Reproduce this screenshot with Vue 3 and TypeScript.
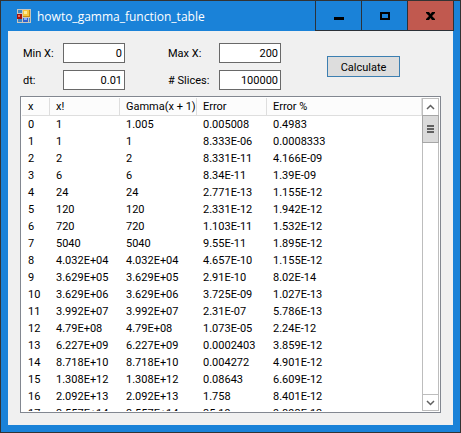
<script setup lang="ts">
import { ref } from 'vue'

const minX = ref('0')
const maxX = ref('200')
const dt = ref('0.01')
const slices = ref('100000')

const columns: string[] = ['x', 'x!', 'Gamma(x + 1)', 'Error', 'Error %']

const rows: string[][] = [
  ['0', '1', '1.005', '0.005008', '0.4983'],
  ['1', '1', '1', '8.333E-06', '0.0008333'],
  ['2', '2', '2', '8.331E-11', '4.166E-09'],
  ['3', '6', '6', '8.34E-11', '1.39E-09'],
  ['4', '24', '24', '2.771E-13', '1.155E-12'],
  ['5', '120', '120', '2.331E-12', '1.942E-12'],
  ['6', '720', '720', '1.103E-11', '1.532E-12'],
  ['7', '5040', '5040', '9.55E-11', '1.895E-12'],
  ['8', '4.032E+04', '4.032E+04', '4.657E-10', '1.155E-12'],
  ['9', '3.629E+05', '3.629E+05', '2.91E-10', '8.02E-14'],
  ['10', '3.629E+06', '3.629E+06', '3.725E-09', '1.027E-13'],
  ['11', '3.992E+07', '3.992E+07', '2.31E-07', '5.786E-13'],
  ['12', '4.79E+08', '4.79E+08', '1.073E-05', '2.24E-12'],
  ['13', '6.227E+09', '6.227E+09', '0.0002403', '3.859E-12'],
  ['14', '8.718E+10', '8.718E+10', '0.004272', '4.901E-12'],
  ['15', '1.308E+12', '1.308E+12', '0.08643', '6.609E-12'],
  ['16', '2.092E+13', '2.092E+13', '1.758', '8.401E-12'],
  ['17', '3.557E+14', '3.557E+14', '35.19', '9.893E-12'],
]
</script>

<template>
  <div class="window">
    <header class="titlebar">
      <svg class="app-icon" width="14" height="14" viewBox="0 0 14 14" aria-hidden="true">
        <rect width="14" height="14" fill="#c9c5bd" />
        <rect x="1" y="1" width="4" height="3" fill="#3f86c4" />
        <rect x="1" y="10" width="4" height="3" fill="#3f86c4" />
        <rect x="12" y="9" width="1" height="4" fill="#3f86c4" />
        <rect x="0" y="5" width="5" height="5" fill="#a3120c" />
        <rect x="1" y="6" width="2" height="2" fill="#ef6a58" />
        <rect x="6" y="1" width="7" height="7" fill="#c78d12" />
        <rect x="6" y="1" width="6" height="6" fill="#f5c73d" />
        <rect x="7" y="2" width="3" height="3" fill="#fdeb9b" />
        <rect x="6" y="9" width="5" height="4" fill="#2f62cf" />
        <rect x="7" y="9" width="3" height="2" fill="#86aef4" />
      </svg>
      <h1 class="title">howto_gamma_function_table</h1>
      <button class="caption" type="button" aria-label="Minimize">
        <svg width="10" height="10" viewBox="0 0 10 10"><path d="M0 6h10v3H0z" /></svg>
      </button>
      <button class="caption" type="button" aria-label="Maximize">
        <svg width="10" height="10" viewBox="0 0 10 10">
          <path fill-rule="evenodd" d="M0 1h10v8H0zM2 3v4h6V3z" />
        </svg>
      </button>
      <button class="caption close" type="button" aria-label="Close">
        <svg width="9" height="8" viewBox="0 0 9 8">
          <path d="M0 0h3l1.500 2L6 0h3v1L6 4l3 3v1H6L4.500 6 3 8H0V7l3-3-3-3z" />
        </svg>
      </button>
    </header>

    <main class="client">
      <form class="inputs" @submit.prevent>
        <div class="fields">
          <label for="min-x">Min X:</label>
          <input id="min-x" v-model="minX" type="text" />
          <label class="second" for="max-x">Max X:</label>
          <input id="max-x" v-model="maxX" type="text" />
          <label for="dt">dt:</label>
          <input id="dt" v-model="dt" type="text" />
          <label class="second" for="slices"># Slices:</label>
          <input id="slices" v-model="slices" type="text" />
        </div>
        <button class="calculate" type="submit">Calculate</button>
      </form>

      <section class="list">
        <div class="viewport">
          <table>
            <colgroup>
              <col class="col-x" />
              <col class="col-factorial" />
              <col class="col-gamma" />
              <col class="col-error" />
              <col />
            </colgroup>
            <thead>
              <tr>
                <th v-for="column in columns" :key="column" scope="col">{{ column }}</th>
              </tr>
            </thead>
            <tbody>
              <tr v-for="row in rows" :key="row[0]">
                <td v-for="(cell, i) in row" :key="i">{{ cell }}</td>
              </tr>
            </tbody>
          </table>
        </div>
        <div class="scrollbar">
          <button class="arrow" type="button" aria-label="Scroll up">
            <svg width="9" height="6" viewBox="0 0 9 6"><path d="M1 5l3.500-3.500L8 5" /></svg>
          </button>
          <div class="thumb"><i></i><i></i><i></i></div>
          <button class="arrow down" type="button" aria-label="Scroll down">
            <svg width="9" height="6" viewBox="0 0 9 6"><path d="M1 1l3.500 3.500L8 1" /></svg>
          </button>
        </div>
      </section>
    </main>
  </div>
</template>

<style>
body {
  margin: 0;
}
</style>

<style scoped>
.window,
.window * {
  box-sizing: border-box;
}

.window {
  display: flex;
  flex-direction: column;
  height: 100vh;
  padding: 0 7px 7px;
  border: 1px solid #333;
  background: #1a82d8;
  color: #000;
  font: 11px/17px Roboto, "Liberation Sans", sans-serif;
}

button,
input {
  font: inherit;
  color: inherit;
  border-radius: 0;
}

.titlebar {
  display: flex;
  align-items: center;
  height: 30px;
  padding-left: 9px;
  flex: none;
}

.app-icon {
  flex: none;
}

.title {
  flex: 1;
  margin: 0 0 0 6px;
  color: #fff;
  font: 12px/17px "Open Sans", "Noto Sans", sans-serif;
}

.caption {
  display: flex;
  align-items: center;
  justify-content: center;
  align-self: stretch;
  width: 46px;
  padding: 0;
  border: 0 solid #2b3138;
  border-width: 0 0 1px 1px;
  background: transparent;
}

.caption.close {
  width: 47px;
  margin-right: -1px;
  border-right-width: 1px;
  background: #c1594f;
}

.client {
  display: flex;
  flex: 1;
  flex-direction: column;
  gap: 6px;
  min-height: 0;
  padding: 12px;
  background: #f0f0f0;
}

.inputs {
  display: flex;
  align-items: center;
  gap: 46px;
  padding-left: 3px;
}

.fields {
  display: grid;
  grid-template-columns: 40px 62px 94px 62px;
  row-gap: 7px;
  align-items: center;
}

.fields .second {
  padding-left: 43px;
}

.fields input {
  width: 62px;
  height: 20px;
  padding: 0 2px;
  border: 1px solid #696969;
  background: #fff;
  text-align: right;
}

.calculate {
  width: 73px;
  height: 21px;
  padding: 2px 0 0;
  border: 1px solid #3c7fb1;
  background: #ddd;
  line-height: 17px;
}

.list {
  display: flex;
  flex: 1;
  min-height: 0;
  padding: 1px;
  border: 1px solid #828790;
  background: #fff;
}

.viewport {
  flex: 1;
  min-width: 0;
  overflow: hidden;
}

table {
  width: 100%;
  border-collapse: separate;
  border-spacing: 0;
  table-layout: fixed;
}

.col-x {
  width: 28px;
}

.col-factorial,
.col-error {
  width: 70px;
}

.col-gamma {
  width: 77px;
}

th,
td {
  height: 17px;
  padding: 0 0 0 6px;
  font-weight: normal;
  text-align: left;
  white-space: nowrap;
}

th {
  height: 18px;
  border-right: 1px solid #dedede;
  border-bottom: 1px solid #dedede;
  background: #fcfcfc;
}

.scrollbar {
  display: flex;
  flex-direction: column;
  width: 17px;
  border: 1px solid #bdbdbd;
  background: #fff;
}

.arrow {
  display: flex;
  align-items: center;
  justify-content: center;
  height: 16px;
  padding: 0;
  border: 0;
  background: #fff;
}

.arrow path {
  fill: none;
  stroke: #606060;
  stroke-width: 1.5;
}

.arrow.down {
  margin-top: auto;
  border-top: 1px solid #bdbdbd;
}

.thumb {
  display: flex;
  flex-direction: column;
  align-items: center;
  justify-content: center;
  gap: 1px;
  height: 28px;
  margin: 0 -1px;
  border: 1px solid #a6a6a6;
  background: #dadada;
}

.thumb i {
  width: 7px;
  height: 2px;
  background: #606060;
}
</style>
